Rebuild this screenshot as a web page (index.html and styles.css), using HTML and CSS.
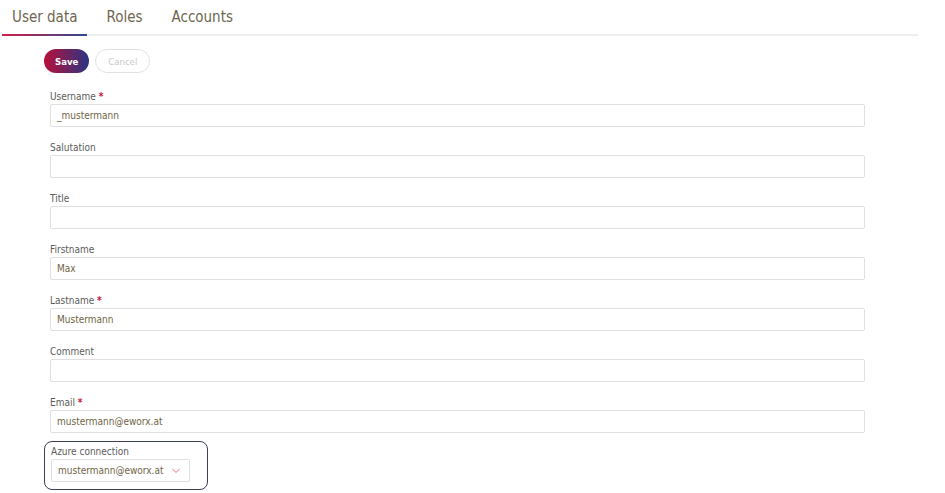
FILE: index.html
```html
<!DOCTYPE html>
<html lang="en">
<head>
    <meta charset="UTF-8">
    <title>User data</title>
    <link rel="stylesheet" href="styles.css">
</head>
<body>
    <div class="tabs">
        <div class="tab active">User data</div>
        <div class="tab">Roles</div>
        <div class="tab">Accounts</div>
    </div>

    <div class="content">
        <div class="actions">
            <button class="btn btn-save">Save</button>
            <button class="btn btn-cancel" disabled>Cancel</button>
        </div>

        <div class="form">
            <div class="field">
                <label>Username <span class="req">*</span></label>
                <div class="input">_mustermann</div>
            </div>
            <div class="field">
                <label>Salutation</label>
                <div class="input"></div>
            </div>
            <div class="field">
                <label>Title</label>
                <div class="input"></div>
            </div>
            <div class="field">
                <label>Firstname</label>
                <div class="input">Max</div>
            </div>
            <div class="field">
                <label>Lastname <span class="req">*</span></label>
                <div class="input">Mustermann</div>
            </div>
            <div class="field">
                <label>Comment</label>
                <div class="input"></div>
            </div>
            <div class="field">
                <label>Email <span class="req">*</span></label>
                <div class="input">mustermann@eworx.at</div>
            </div>
            <div class="field highlight">
                <label>Azure connection</label>
                <div class="input select">
                    <span>mustermann@eworx.at</span>
                    <svg class="chevron" width="10" height="6" viewBox="0 0 10 6"><path d="M1.5 1 L5 4.5 L8.5 1" fill="none" stroke="#ec6a85" stroke-width="1"/></svg>
                </div>
            </div>
        </div>
    </div>
</body>
</html>
```

FILE: styles.css
```css
body {
    margin: 0;
    font-family: "DejaVu Sans Condensed", "DejaVu Sans", Verdana, sans-serif;
    background: #fff;
    color: #555;
}

.tabs {
    display: flex;
    gap: 9px;
    width: 916px;
    margin-left: 2px;
    border-bottom: 2px solid #eeeeee;
}

.tab {
    font-size: 15px;
    color: #6e6650;
    padding: 8px 10px 8px 10px;
    margin-bottom: -2px;
    border-bottom: 2px solid transparent;
}

.tab.active {
    border-image: linear-gradient(to right, #d21e48, #2b4a93) 1;
}

.content {
    padding-left: 44px;
}

.actions {
    display: flex;
    gap: 6px;
    margin-top: 13px;
}

.btn {
    height: 24px;
    border-radius: 12px;
    font-family: inherit;
    font-size: 9.5px;
    padding: 0 11px;
}

.btn-save {
    background: linear-gradient(to right, #b8103a, #2a3583);
    color: #fff;
    border: none;
    font-weight: bold;
}

.btn-cancel {
    background: #fff;
    color: #c8c8c8;
    border: 1px solid #e2e2e2;
    padding: 0 12px;
}

.form {
    margin-top: 17px;
}

.field {
    padding-left: 6px;
    margin-bottom: 14px;
}

.field label {
    display: block;
    font-size: 10px;
    color: #5b5b5b;
    line-height: 13px;
    margin-bottom: 1px;
}

.req {
    color: #c8143c;
    font-weight: bold;
}

.input {
    width: 815px;
    height: 23px;
    box-sizing: border-box;
    border: 1px solid #e0e0e0;
    border-radius: 2px;
    font-size: 10px;
    color: #6f6445;
    line-height: 21px;
    padding-left: 6px;
}

.highlight {
    display: inline-block;
    border: 1.5px solid #3b3f58;
    border-radius: 8px;
    padding: 3px 17px 7px 6px;
    margin-top: -6px;
}

.select {
    width: 139px;
    display: flex;
    align-items: center;
    gap: 8px;
}

.chevron {
    margin-top: 1px;
}
```
